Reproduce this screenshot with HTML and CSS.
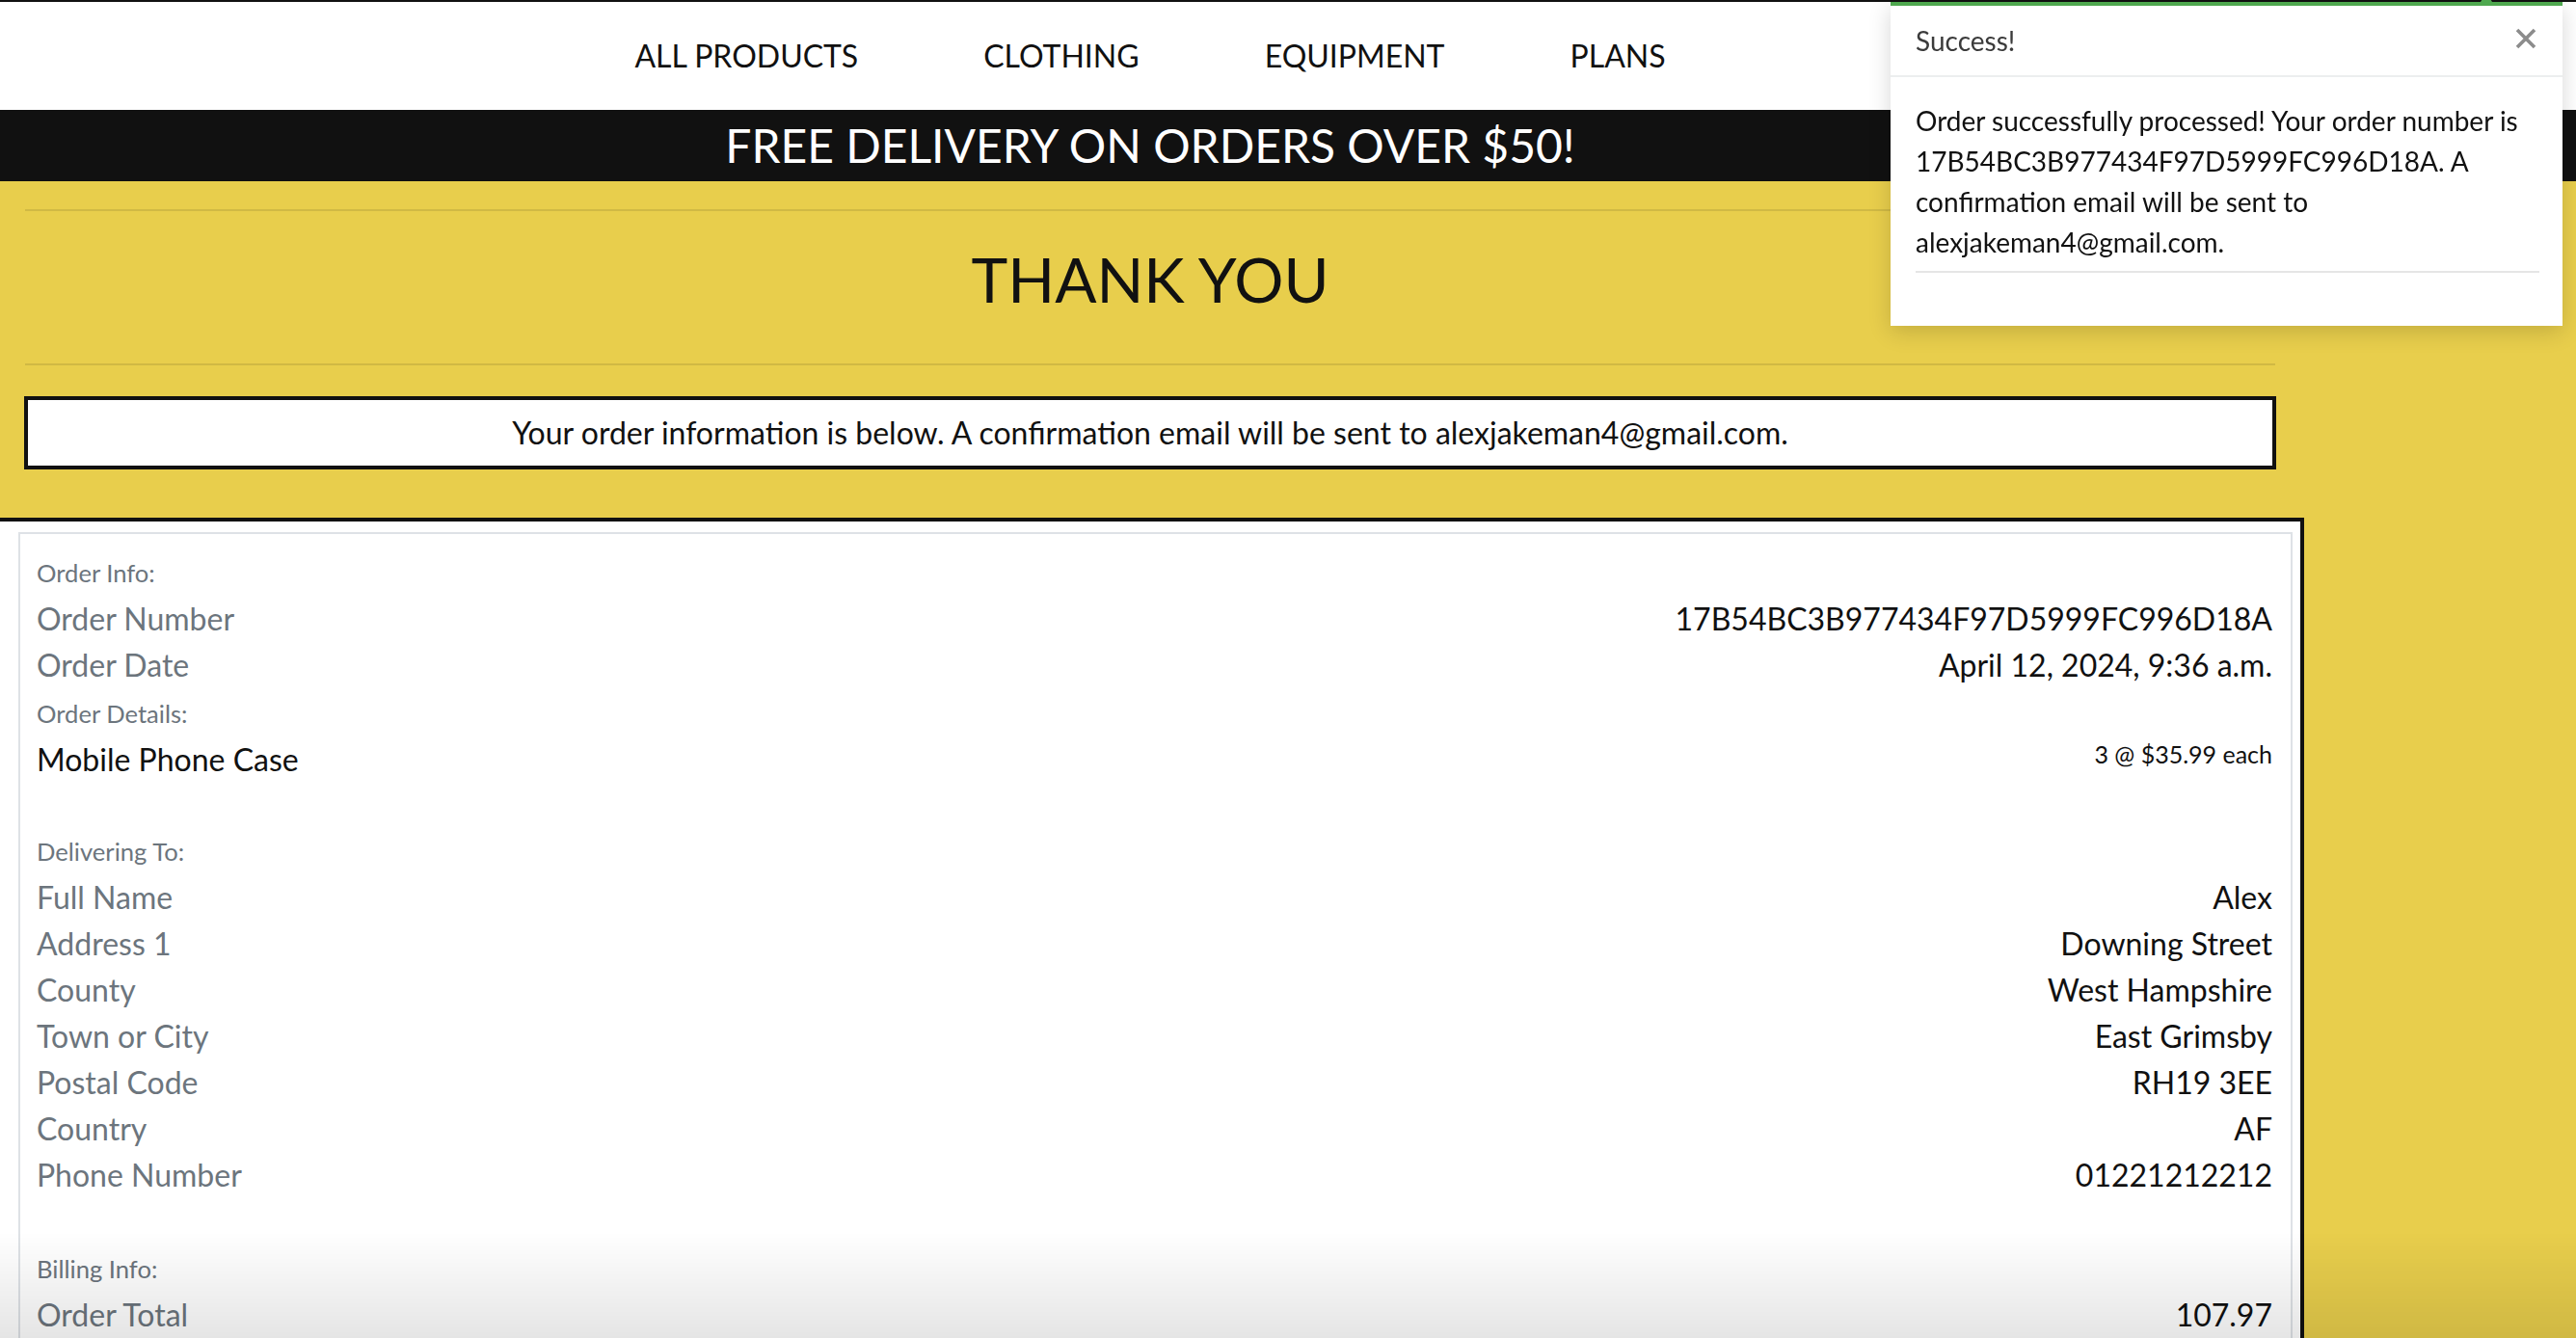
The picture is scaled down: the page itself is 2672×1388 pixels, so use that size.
FILE: index.html
```html
<!DOCTYPE html>
<html lang="en">
<head>
<meta charset="utf-8">
<title>Checkout Success</title>
<link rel="stylesheet" href="styles.css">
</head>
<body>
<header class="site-header">
  <nav class="main-nav">
    <a class="nav-link" href="#">ALL PRODUCTS</a>
    <a class="nav-link" href="#">CLOTHING</a>
    <a class="nav-link" href="#">EQUIPMENT</a>
    <a class="nav-link" href="#">PLANS</a>
  </nav>
  <div class="delivery-banner">
    <div class="banner-inner">FREE DELIVERY ON ORDERS OVER $50!</div>
  </div>
</header>

<main class="page">
  <div class="page-top">
    <hr class="rule">
    <h1 class="page-title">THANK YOU</h1>
    <hr class="rule">
    <p class="info-box">Your order information is below. A confirmation email will be sent to alexjakeman4@gmail.com.</p>
  </div>

  <section class="order-outer">
    <div class="order-card">
      <div class="label-row"><small class="section-label">Order Info:</small></div>
      <div class="kv-row"><span class="key">Order Number</span><span class="val">17B54BC3B977434F97D5999FC996D18A</span></div>
      <div class="kv-row"><span class="key">Order Date</span><span class="val">April 12, 2024, 9:36 a.m.</span></div>

      <div class="label-row"><small class="section-label">Order Details:</small></div>
      <div class="kv-row item-row"><span class="item-name">Mobile Phone Case</span><span class="item-qty">3 @ $35.99 each</span></div>

      <div class="label-row"><small class="section-label">Delivering To:</small></div>
      <div class="kv-row"><span class="key">Full Name</span><span class="val">Alex</span></div>
      <div class="kv-row"><span class="key">Address 1</span><span class="val">Downing Street</span></div>
      <div class="kv-row"><span class="key">County</span><span class="val">West Hampshire</span></div>
      <div class="kv-row"><span class="key">Town or City</span><span class="val">East Grimsby</span></div>
      <div class="kv-row"><span class="key">Postal Code</span><span class="val">RH19 3EE</span></div>
      <div class="kv-row"><span class="key">Country</span><span class="val">AF</span></div>
      <div class="kv-row group-end"><span class="key">Phone Number</span><span class="val">01221212212</span></div>

      <div class="label-row"><small class="section-label">Billing Info:</small></div>
      <div class="kv-row"><span class="key">Order Total</span><span class="val">107.97</span></div>
      <div class="kv-row"><span class="key">Delivery</span><span class="val">0.00</span></div>
      <div class="kv-row"><span class="key">Grand Total</span><span class="val">107.97</span></div>
    </div>
  </section>
</main>

<div class="toast" role="alert">
  <div class="toast-arrow"></div>
  <div class="toast-capper"></div>
  <div class="toast-header">
    <span class="toast-title">Success!</span>
    <button class="toast-close" type="button" aria-label="Close">
      <svg class="close-icon" viewBox="0 0 22 22" width="22" height="22" aria-hidden="true">
        <path d="M2 2 L20 20 M20 2 L2 20" stroke="currentColor" stroke-width="3.6" stroke-linecap="butt" fill="none"/>
      </svg>
    </button>
  </div>
  <div class="toast-body">
    <p class="toast-text">Order successfully processed! Your order number is 17B54BC3B977434F97D5999FC996D18A. A confirmation email will be sent to alexjakeman4@gmail.com.</p>
    <hr class="toast-rule">
  </div>
</div>

<div class="screen-fade"></div>
</body>
</html>
```

FILE: styles.css
```css
* {
  box-sizing: border-box;
}

html,
body {
  margin: 0;
  padding: 0;
}

body {
  font-family: Lato, "Noto Sans", "Liberation Sans", sans-serif;
  background: #e8ce4c;
  color: #111;
  overflow: hidden;
}

/* ---------- header ---------- */
.site-header {
  background: #fff;
  border-top: 2px solid #111;
}

.main-nav {
  width: 2386px;
  height: 112px;
  display: flex;
  justify-content: center;
  align-items: center;
  gap: 130px;
}

.nav-link {
  font-size: 32px;
  line-height: 1.2;
  color: #111;
  text-decoration: none;
}

.delivery-banner {
  background: #111;
}

.banner-inner {
  width: 2386px;
  height: 74px;
  display: flex;
  align-items: center;
  justify-content: center;
  color: #fff;
  font-size: 48px;
  line-height: 1.2;
}

/* ---------- page ---------- */
.page {
  background: #e8ce4c;
}

.page-top {
  width: 2386px;
  padding: 29px 25px 50px;
}

.rule {
  border: 0;
  border-top: 2px solid rgba(0, 0, 0, 0.1);
  margin: 0 1px;
  height: 0;
}

.page-title {
  font-size: 64px;
  font-weight: 400;
  line-height: 78px;
  text-align: center;
  margin: 32px 0 48px;
  color: #111;
}

.info-box {
  margin: 32px 0 0;
  background: #fff;
  border: 4px solid #111;
  padding: 10px;
  font-size: 32px;
  line-height: 48px;
  text-align: center;
  color: #111;
}

/* ---------- order card ---------- */
.order-outer {
  width: 2390px;
  background: #fff;
  border-top: 4px solid #111;
  border-right: 4px solid #111;
  padding: 11px 8px 0 19px;
}

.order-card {
  border: 2px solid #dee2e6;
  padding: 14px 19px 40px 17px;
}

.label-row {
  font-size: 32px;
  line-height: 48px;
}

.section-label {
  font-size: 25.6px;
  color: #6c757d;
}

.kv-row {
  display: flex;
  justify-content: space-between;
  align-items: flex-start;
  font-size: 32px;
  line-height: 48px;
}

.key {
  color: #6c757d;
}

.val {
  color: #111;
  text-align: right;
}

.item-row {
  margin-bottom: 45px;
}

.item-name {
  color: #111;
}

.item-qty {
  font-size: 25px;
  line-height: 1.5;
  color: #111;
}

.group-end {
  margin-bottom: 47px;
}

/* ---------- toast ---------- */
.toast {
  position: fixed;
  top: 2px;
  left: 1961px;
  width: 697px;
  background: #fff;
  box-shadow: 0 6px 22px rgba(0, 0, 0, 0.16);
  z-index: 10;
}

.toast-arrow {
  position: absolute;
  top: -10px;
  right: 73px;
  width: 0;
  height: 0;
  border-left: 6.5px solid transparent;
  border-right: 6.5px solid transparent;
  border-bottom: 10px solid #4fa84f;
}

.toast-capper {
  height: 4px;
  background: #4fa84f;
}

.toast-header {
  height: 74px;
  display: flex;
  align-items: center;
  justify-content: space-between;
  padding: 0 27px 0 26px;
  border-bottom: 2px solid #eceeef;
}

.toast-title {
  font-size: 28px;
  line-height: 1.2;
  color: #3b3b3b;
  margin-top: 2px;
}

.toast-close {
  background: none;
  border: 0;
  padding: 0;
  margin: 0 0 4px;
  color: #8c8c8c;
  display: flex;
  cursor: pointer;
}

.close-icon {
  display: block;
}

.toast-body {
  padding: 24px 24px 0 26px;
}

.toast-text {
  margin: 0;
  font-size: 28px;
  line-height: 42px;
  color: #111;
}

.toast-rule {
  border: 0;
  border-top: 2px solid #e5e5e5;
  margin: 9px 0 55px;
  height: 0;
}

/* ---------- bottom fade ---------- */
.screen-fade {
  position: fixed;
  left: 0;
  right: 0;
  bottom: 0;
  height: 110px;
  background: linear-gradient(to bottom, rgba(0, 0, 0, 0), rgba(0, 0, 0, 0.1));
  pointer-events: none;
  z-index: 20;
}
```
